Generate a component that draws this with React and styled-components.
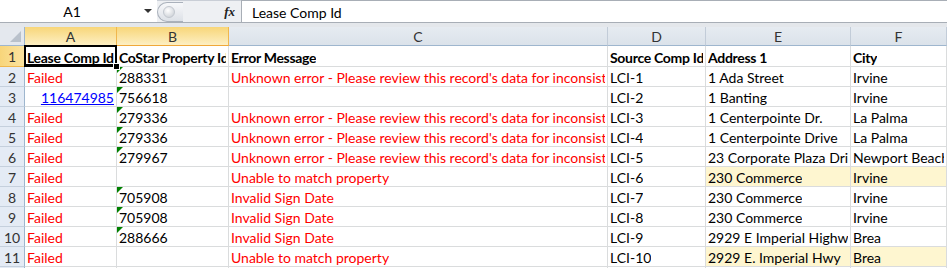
import React from 'react'
import styled, { createGlobalStyle, css } from 'styled-components'

const GlobalStyle = createGlobalStyle`
  html, body {
    margin: 0;
    padding: 0;
    background: #ffffff;
    overflow: hidden;
  }
  body {
    font-family: 'Lato', 'Liberation Sans', sans-serif;
    font-size: 14px;
    color: #000;
  }
`

const Page = styled.div`
  width: 947px;
  height: 268px;
  overflow: hidden;
  display: flex;
  flex-direction: column;
  & > * {
    flex-shrink: 0;
  }
`

const FormulaBar = styled.div`
  display: flex;
  height: 23px;
  box-sizing: border-box;
  border-bottom: 1px solid #a8aeb6;
  background: #ffffff;
`

const NameBox = styled.div`
  width: 157px;
  display: flex;
  align-items: center;
`

const NameLabel = styled.div`
  flex: 1;
  text-align: center;
  padding-top: 1px;
`

const DropArrow = styled.div`
  width: 0;
  height: 0;
  border-left: 4px solid transparent;
  border-right: 4px solid transparent;
  border-top: 4px solid #333;
  margin-right: 5px;
`

const FxArea = styled.div`
  width: 84px;
  display: flex;
  align-items: center;
  background: #eef0f3;
  border-top: 1px solid #c9ced6;
  box-sizing: border-box;
`

const Groove = styled.div`
  width: 26px;
  height: 20px;
  box-sizing: border-box;
  border: 1px solid #aab1bb;
  border-right: none;
  border-radius: 11px 0 0 11px;
  background: linear-gradient(#f7f8fa, #dde1e7);
  display: flex;
  align-items: center;
  padding-left: 5px;
`

const Knob = styled.div`
  width: 10px;
  height: 10px;
  border-radius: 50%;
  background: radial-gradient(circle at 40% 35%, #ffffff, #c4c9d0);
  border: 1px solid #c2c7ce;
`

const Fx = styled.div`
  margin-left: auto;
  margin-right: 6px;
  font-family: 'Liberation Serif', serif;
  font-style: italic;
  font-weight: bold;
  font-size: 13px;
  color: #222;
`

const FormulaInput = styled.div`
  flex: 1;
  border-left: 1px solid #a8aeb6;
  border-top: 1px solid #a8aeb6;
  padding-left: 10px;
  display: flex;
  align-items: center;
  padding-top: 1px;
`

const Band = styled.div`
  height: 4px;
  background: #e4e7eb;
`

const Sheet = styled.div`
  display: grid;
  grid-template-columns: 25px 92px 112px 379px 98px 145px 96px;
  grid-template-rows: 19px 21px repeat(11, 20px);
`

const Corner = styled.div`
  background: #e4e8ee;
  border-right: 1px solid #9eb6ce;
  border-bottom: 1px solid #9eb6ce;
  position: relative;
  &::after {
    content: '';
    position: absolute;
    right: 3px;
    bottom: 3px;
    border-left: 11px solid transparent;
    border-bottom: 11px solid #b9c1cb;
  }
`

const ColHead = styled.div`
  box-sizing: border-box;
  display: flex;
  align-items: center;
  justify-content: center;
  font-size: 14px;
  color: #333;
  border-right: 1px solid #c2ccd8;
  border-bottom: 1px solid #9eb6ce;
  background: linear-gradient(#e6ebf1, #dbe2ea);
  ${p => p.$active && css`
    background: linear-gradient(#f8d679, #fdefc3);
    border-right-color: #f0b74d;
    border-bottom-color: #f0a83a;
  `}
`

const RowHead = styled.div`
  box-sizing: border-box;
  display: flex;
  align-items: center;
  justify-content: center;
  font-size: 14px;
  color: #333;
  background: #e4ebf5;
  border-right: 1px solid #9eb6ce;
  border-bottom: 1px solid #c5d0dd;
  padding-top: 1px;
  ${p => p.$active && css`
    background: linear-gradient(90deg, #f8d57a, #fbe3a0);
    border-right-color: #f0a83a;
    border-bottom-color: #f0b74d;
  `}
`

const Cell = styled.div`
  box-sizing: border-box;
  position: relative;
  border-right: 1px solid #dadcdd;
  border-bottom: 1px solid #dadcdd;
  white-space: nowrap;
  overflow: hidden;
  display: flex;
  align-items: flex-end;
  padding: 0 2px 0 2px;
  line-height: 17px;
  background: ${p => (p.$fill ? '#fef6d0' : '#ffffff')};
  color: ${p => (p.$red ? '#ff0000' : '#000000')};
  font-weight: ${p => (p.$bold ? 700 : 400)};
  letter-spacing: ${p => (p.$bold ? '-0.3px' : '0')};
  justify-content: ${p => (p.$right ? 'flex-end' : 'flex-start')};
  ${p => p.$flag && css`
    &::before {
      content: '';
      position: absolute;
      left: 0;
      top: 0;
      border-top: 6px solid #008000;
      border-right: 6px solid transparent;
    }
  `}
  ${p => p.$selected && css`
    overflow: visible;
    z-index: 2;
    &::after {
      content: '';
      position: absolute;
      left: -1px;
      top: -1px;
      right: -1px;
      bottom: -1px;
      border: 2px solid #000;
      border-bottom-width: 3px;
      pointer-events: none;
    }
  `}
`

const CellText = styled.span`
  overflow: hidden;
`

const FillHandle = styled.span`
  position: absolute;
  right: -4px;
  bottom: -4px;
  width: 5px;
  height: 5px;
  background: #000;
  border: 1px solid #fff;
  z-index: 3;
`

const Link = styled.span`
  color: #0000ff;
  text-decoration: underline;
`

const columns = ['A', 'B', 'C', 'D', 'E', 'F']

const UNKNOWN = "Unknown error - Please review this record's data for inconsistencies"
const NOMATCH = 'Unable to match property'
const SIGN = 'Invalid Sign Date'

const rows = [
  { a: 'Failed', b: '288331', c: UNKNOWN, d: 'LCI-1', e: '1 Ada Street', f: 'Irvine' },
  { link: '116474985', b: '756618', c: '', d: 'LCI-2', e: '1 Banting', f: 'Irvine' },
  { a: 'Failed', b: '279336', c: UNKNOWN, d: 'LCI-3', e: '1 Centerpointe Dr.', f: 'La Palma' },
  { a: 'Failed', b: '279336', c: UNKNOWN, d: 'LCI-4', e: '1 Centerpointe Drive', f: 'La Palma' },
  { a: 'Failed', b: '279967', c: UNKNOWN, d: 'LCI-5', e: '23 Corporate Plaza Drive', f: 'Newport Beach' },
  { a: 'Failed', b: '', c: NOMATCH, d: 'LCI-6', e: '230 Commerce', f: 'Irvine', fill: true },
  { a: 'Failed', b: '705908', c: SIGN, d: 'LCI-7', e: '230 Commerce', f: 'Irvine' },
  { a: 'Failed', b: '705908', c: SIGN, d: 'LCI-8', e: '230 Commerce', f: 'Irvine' },
  { a: 'Failed', b: '288666', c: SIGN, d: 'LCI-9', e: '2929 E Imperial Highway', f: 'Brea' },
  { a: 'Failed', b: '', c: NOMATCH, d: 'LCI-10', e: '2929 E. Imperial Hwy', f: 'Brea', fill: true },
  { a: '', b: '', c: '', d: '', e: '', f: '' },
]

const headers = ['Lease Comp Id', 'CoStar Property Id', 'Error Message', 'Source Comp Id', 'Address 1', 'City']

export default function App() {
  return (
    <Page>
      <GlobalStyle />
      <FormulaBar>
        <NameBox>
          <NameLabel>A1</NameLabel>
          <DropArrow />
        </NameBox>
        <FxArea>
          <Groove>
            <Knob />
          </Groove>
          <Fx>fx</Fx>
        </FxArea>
        <FormulaInput>Lease Comp Id</FormulaInput>
      </FormulaBar>
      <Band />
      <Sheet>
        <Corner />
        {columns.map(c => (
          <ColHead key={c} $active={c === 'A' || c === 'B'}>{c}</ColHead>
        ))}

        <RowHead $active>1</RowHead>
        {headers.map((h, i) => (
          <Cell key={h} $bold $selected={i === 0}>
            <CellText>{h}</CellText>
            {i === 0 && <FillHandle />}
          </Cell>
        ))}

        {rows.map((r, i) => (
          <React.Fragment key={i}>
            <RowHead>{i + 2}</RowHead>
            <Cell $red $right={!!r.link}>
              {r.link ? <Link>{r.link}</Link> : <CellText>{r.a}</CellText>}
            </Cell>
            <Cell $flag={!!r.b}><CellText>{r.b}</CellText></Cell>
            <Cell $red><CellText>{r.c}</CellText></Cell>
            <Cell><CellText>{r.d}</CellText></Cell>
            <Cell $fill={r.fill}><CellText>{r.e}</CellText></Cell>
            <Cell $fill={r.fill}><CellText>{r.f}</CellText></Cell>
          </React.Fragment>
        ))}
      </Sheet>
    </Page>
  )
}
